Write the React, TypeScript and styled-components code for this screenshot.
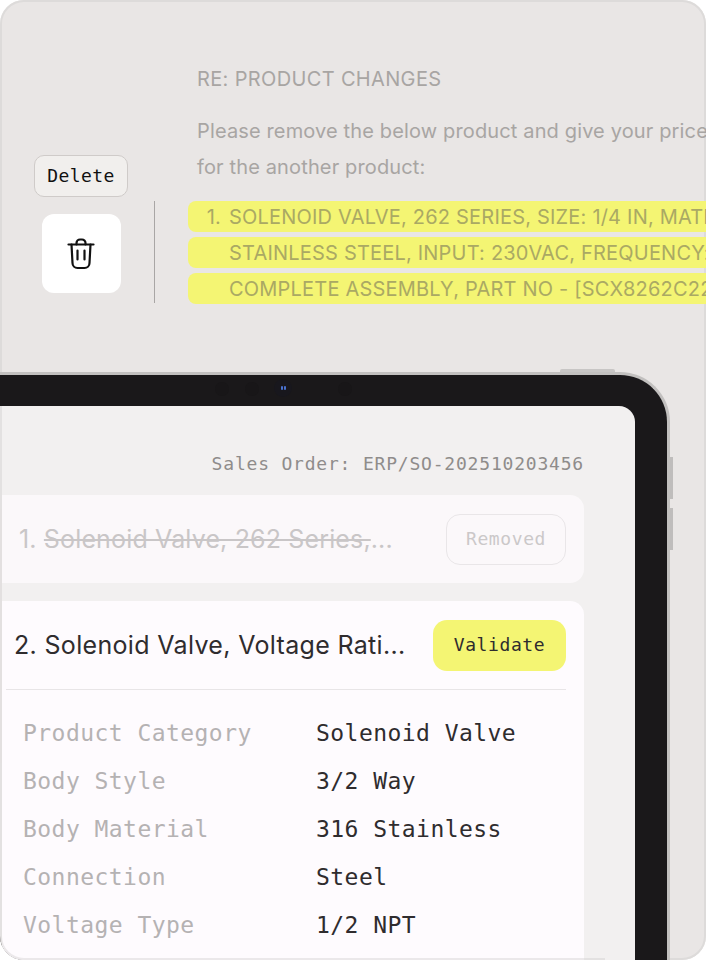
import { createGlobalStyle } from 'styled-components';
import styled from 'styled-components';

const details = [
  { label: 'Product Category', value: 'Solenoid Valve' },
  { label: 'Body Style', value: '3/2 Way' },
  { label: 'Body Material', value: '316 Stainless' },
  { label: 'Connection', value: 'Steel' },
  { label: 'Voltage Type', value: '1/2 NPT' },
];

const highlights = [
  { number: '1.', text: 'SOLENOID VALVE, 262 SERIES, SIZE: 1/4 IN, MATERIAL: 316L' },
  { number: '', text: 'STAINLESS STEEL, INPUT: 230VAC, FREQUENCY: 50/60 HZ,' },
  { number: '', text: 'COMPLETE ASSEMBLY, PART NO - [SCX8262C220]' },
];

const sensors = [222, 252, 345];

function TrashIcon() {
  return (
    <svg width="28" height="32" viewBox="0 0 28 32" fill="none" stroke="#111" strokeWidth="2.2" strokeLinecap="round" strokeLinejoin="round">
      <path d="M1.5 6.5h25" />
      <path d="M9.5 6.5V5a3.5 3.5 0 0 1 3.5-3.500h2A3.500 3.500 0 0 1 18.500 5v1.500" />
      <path d="M4.500 6.500l1 18.500a5 5 0 0 0 5 5h7a5 5 0 0 0 5-5l1-18.500" />
      <path d="M10.500 12.500v9M17.500 12.500v9" />
    </svg>
  );
}

function App() {
  return (
    <>
      <GlobalStyle />
      <Frame>
        <EmailPanel>
          <Actions>
            <DeleteButton>Delete</DeleteButton>
            <TrashTile>
              <TrashIcon />
            </TrashTile>
          </Actions>
          <VerticalRule />
          <Email>
            <Subject>RE: PRODUCT CHANGES</Subject>
            <Body>
              Please remove the below product and give your price
              <br />
              for the another product:
            </Body>
            <Highlights>
              {highlights.map((line) => (
                <Highlight key={line.text}>
                  <LineNumber>{line.number}</LineNumber>
                  {line.text}
                </Highlight>
              ))}
            </Highlights>
          </Email>
        </EmailPanel>

        <Tablet>
          <TopButton />
          <SideButton $top={82} />
          <SideButton $top={133} />
          {sensors.map((x) => (
            <Sensor key={x} $x={x} />
          ))}
          <Camera>
            <CameraLens />
            <CameraLens />
          </Camera>
          <Screen>
            <OrderNumber>Sales Order: ERP/SO-202510203456</OrderNumber>
            <RemovedCard>
              <CardTitle $removed>
                1. <s>Solenoid Valve, 262 Series,</s>...
              </CardTitle>
              <RemovedButton>Removed</RemovedButton>
            </RemovedCard>
            <ProductCard>
              <CardHeader>
                <CardTitle>2. Solenoid Valve, Voltage Rati...</CardTitle>
                <ValidateButton>Validate</ValidateButton>
              </CardHeader>
              <DetailList>
                {details.map((item) => (
                  <DetailRow key={item.label}>
                    <DetailLabel>{item.label}</DetailLabel>
                    <DetailValue>{item.value}</DetailValue>
                  </DetailRow>
                ))}
              </DetailList>
            </ProductCard>
          </Screen>
          <FrameEdge />
        </Tablet>
      </Frame>
    </>
  );
}

export default App;

const GlobalStyle = createGlobalStyle`
  html, body {
    margin: 0;
    padding: 0;
    background: #ffffff;
  }
  * {
    box-sizing: border-box;
  }
`;

const mono = `'DejaVu Sans Mono', monospace`;
const sans = `Inter, 'Liberation Sans', sans-serif`;

const Frame = styled.div`
  width: 706px;
  height: 960px;
  overflow: hidden;
  background: #e9e6e5;
  box-shadow: inset 0 0 0 2px #dddbda;
  border-radius: 24px;
  display: flex;
  flex-direction: column;
`;

const EmailPanel = styled.div`
  height: 372px;
  flex: none;
  display: flex;
  padding-top: 67px;
`;

const Actions = styled.div`
  width: 154px;
  height: 227px;
  flex: none;
  display: flex;
  flex-direction: column;
  align-items: center;
  justify-content: flex-end;
  gap: 17px;
  padding: 0 0 1px 8px;
`;

const DeleteButton = styled.div`
  width: 94px;
  height: 42px;
  padding-bottom: 2px;
  display: flex;
  align-items: center;
  justify-content: center;
  background: #f1efed;
  border: 1px solid #cfcbc9;
  border-radius: 10px;
  font-family: ${mono};
  font-size: 18px;
  letter-spacing: 0.45px;
  color: #111111;
`;

const TrashTile = styled.div`
  width: 79px;
  height: 79px;
  display: flex;
  align-items: center;
  justify-content: center;
  background: #ffffff;
  border-radius: 12px;
`;

const VerticalRule = styled.div`
  width: 1px;
  height: 102px;
  flex: none;
  margin-top: 134px;
  background: #a9a6a5;
`;

const Email = styled.div`
  flex: none;
  margin-left: 33px;
  width: 518px;
  font-family: ${sans};
  color: #a8a5a3;
  white-space: nowrap;
`;

const Subject = styled.div`
  font-size: 20px;
  line-height: 24px;
  letter-spacing: 0.35px;
  padding-left: 9px;
`;

const Body = styled.div`
  font-size: 20px;
  line-height: 36px;
  letter-spacing: 0.14px;
  padding-left: 9px;
  margin-top: 22px;
`;

const Highlights = styled.div`
  margin-top: 16px;
  display: flex;
  flex-direction: column;
  gap: 5px;
`;

const Highlight = styled.div`
  height: 31px;
  display: flex;
  align-items: center;
  background: #f4f573;
  border-radius: 8px 0 0 8px;
  font-size: 20px;
  letter-spacing: 0.2px;
  color: #aaa964;
  overflow: hidden;
`;

const LineNumber = styled.span`
  width: 41px;
  flex: none;
  text-align: right;
  padding-right: 8px;
`;

const Tablet = styled.div`
  position: relative;
  flex: none;
  width: 700px;
  height: 700px;
  margin-left: -30px;
  padding: 31px 32px 0 0;
  background: #1a181a;
  border: solid #c2c0bf;
  border-width: 3px 3px 0 0;
  border-radius: 0 50px 0 0;
`;

const TopButton = styled.div`
  position: absolute;
  top: -6px;
  right: 52px;
  width: 55px;
  height: 3px;
  background: #c8c6c5;
  border-radius: 2px 2px 0 0;
`;

const SideButton = styled.div<{ $top: number }>`
  position: absolute;
  top: ${(props) => props.$top}px;
  right: -6px;
  width: 3px;
  height: 42px;
  background: #bfbdbc;
`;

const Sensor = styled.div<{ $x: number }>`
  position: absolute;
  top: 7px;
  left: ${(props) => props.$x + 23}px;
  width: 14px;
  height: 14px;
  border-radius: 50%;
  background: #181618;
`;

const Camera = styled.div`
  position: absolute;
  top: 4px;
  left: 304px;
  width: 18px;
  height: 18px;
  display: flex;
  align-items: center;
  justify-content: center;
  gap: 1px;
  border-radius: 50%;
  background: #18171d;
`;

const CameraLens = styled.div`
  width: 2px;
  height: 4px;
  border-radius: 1px;
  background: #4a72d0;
`;

const Screen = styled.div`
  height: 100%;
  padding: 0 51px 0 32px;
  background: #f2f0f0;
  border-radius: 0 16px 0 0;
  display: flex;
  flex-direction: column;
`;

/* the outer card's thin edge, which shows through over the tablet screen */
const FrameEdge = styled.div`
  position: absolute;
  top: 31px;
  left: 30px;
  width: 605px;
  height: 554px;
  border: solid rgba(200, 197, 197, 0.35);
  border-width: 0 0 2px 2px;
  border-radius: 0 0 0 24px;
  pointer-events: none;
`;

const OrderNumber = styled.div`
  height: 89px;
  padding-top: 47px;
  text-align: right;
  font-family: ${mono};
  font-size: 18px;
  line-height: 22px;
  letter-spacing: 0.8px;
  color: #8f8c8b;
  white-space: nowrap;
`;

const RemovedCard = styled.div`
  height: 88px;
  flex: none;
  display: flex;
  align-items: center;
  justify-content: space-between;
  padding: 0 18px 0 17px;
  background: #fbf8fa;
  border-radius: 0 14px 14px 0;
`;

const CardTitle = styled.div<{ $removed?: boolean }>`
  font-family: ${sans};
  font-size: 25px;
  letter-spacing: ${(props) => (props.$removed ? '0.15px' : '0.33px')};
  white-space: nowrap;
  color: ${(props) => (props.$removed ? '#c9c6c7' : '#2f2c2e')};
`;

const RemovedButton = styled.div`
  width: 120px;
  height: 51px;
  padding-bottom: 2px;
  display: flex;
  align-items: center;
  justify-content: center;
  border: 1px solid #e9e6e8;
  border-radius: 14px;
  font-family: ${mono};
  font-size: 18px;
  letter-spacing: 0.6px;
  color: #cbc8c9;
`;

const ProductCard = styled.div`
  flex: 1;
  margin-top: 18px;
  padding: 0 18px 0 4px;
  background: #fefbfe;
  border-radius: 0 14px 0 0;
`;

const CardHeader = styled.div`
  height: 89px;
  display: flex;
  align-items: center;
  justify-content: space-between;
  padding-left: 8px;
  border-bottom: 1px solid #e8e5e7;
`;

const ValidateButton = styled.div`
  width: 133px;
  height: 51px;
  padding-bottom: 2px;
  display: flex;
  align-items: center;
  justify-content: center;
  background: #f4f573;
  border-radius: 14px;
  font-family: ${mono};
  font-size: 18px;
  letter-spacing: 0.6px;
  color: #2f2c2e;
`;

const DetailList = styled.div`
  padding: 19px 0 0 17px;
  display: flex;
  flex-direction: column;
`;

const DetailRow = styled.div`
  height: 48px;
  display: flex;
  align-items: center;
  font-family: ${mono};
  font-size: 23px;
  letter-spacing: 0.45px;
  white-space: nowrap;
`;

const DetailLabel = styled.span`
  width: 293px;
  flex: none;
  color: #b5b2b3;
`;

const DetailValue = styled.span`
  color: #2f2c2e;
`;
